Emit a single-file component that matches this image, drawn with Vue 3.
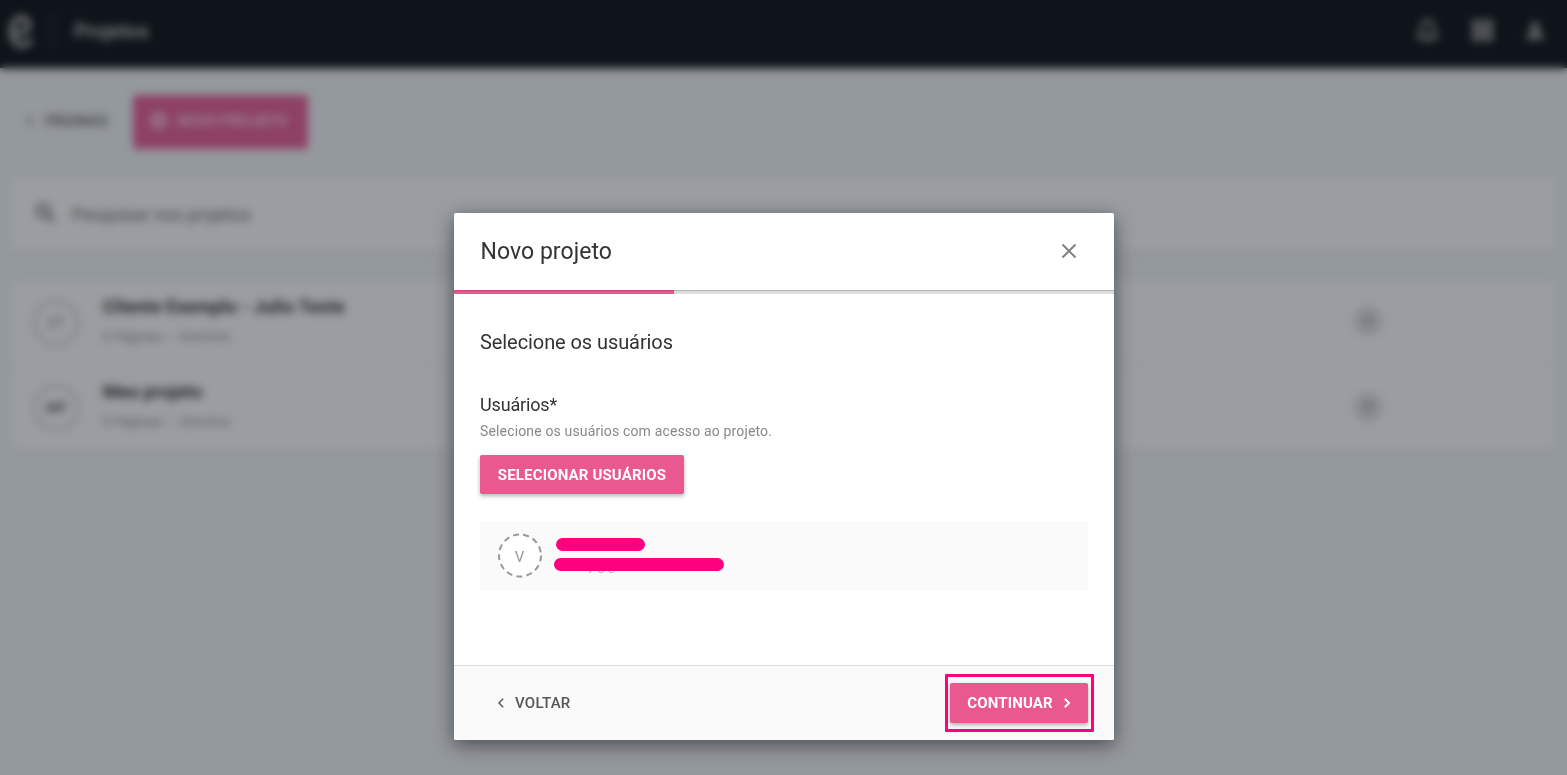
<script setup>
    import { ref } from 'vue';

    const projects = ref([
        { initials: "CT", name: "Cliente Exemplo - Julio Teste", info: "0 Páginas  •  Domínio" },
        { initials: "MP", name: "Meu projeto", info: "0 Páginas  •  Domínio" }
    ]);
    const progress = ref(33.33);
    const open = ref(true);
</script>

<template>
    <div class="page">
        <header class="topbar">
            <svg class="logo" viewBox="0 0 28 36">
                <path d="M7 20 C18 20 21 17 21 11 C21 6 18 4 14 4 C8 4 4 10 4 18 C4 27 8 32 14 32 C19 32 22 30 24 26" />
            </svg>
            <span class="divider"></span>
            <span class="section">Projetos</span>
            <nav class="actions">
                <svg class="bell" viewBox="0 0 24 24">
                    <path d="M12 2 C8 3 6 6 6 10 V15 L3.500 18 H20.500 L18 15 V10 C18 6 16 3 12 2 Z M10 21 H14" />
                </svg>
                <svg class="apps" viewBox="0 0 24 24">
                    <path d="M1 1h6.500v6.500H1zM8.750 1h6.500v6.500h-6.500zM16.500 1H23v6.500h-6.500zM1 8.750h6.500v6.500H1zM8.750 8.750h6.500v6.500h-6.500zM16.500 8.750H23v6.500h-6.500zM1 16.500h6.500V23H1zM8.750 16.500h6.500V23h-6.500zM16.500 16.500H23V23h-6.500z" />
                </svg>
                <svg class="person" viewBox="0 0 24 24">
                    <circle cx="12" cy="7" r="5.500" />
                    <path d="M2 22 V19 C2 15 7 13 12 13 S22 15 22 19 V22 Z" />
                </svg>
            </nav>
        </header>

        <div class="toolbar">
            <button class="back">
                <svg viewBox="0 0 8 12"><path d="M6.500 1.500 L2 6 L6.500 10.500" /></svg>
                PÁGINAS
            </button>
            <button class="newProject">
                <svg viewBox="0 0 16 16">
                    <circle cx="8" cy="8" r="6.500" />
                    <path d="M8 5 V11 M5 8 H11" />
                </svg>
                NOVO PROJETO
            </button>
        </div>

        <div class="search">
            <svg viewBox="0 0 24 24">
                <circle cx="9.500" cy="9.500" r="7" />
                <path d="M15 15 L22 22" />
            </svg>
            Pesquisar nos projetos
        </div>

        <ul class="projects">
            <li v-for="project of projects" :key="project.initials">
                <span class="initials">{{ project.initials }}</span>
                <div class="details">
                    <strong>{{ project.name }}</strong>
                    <small>{{ project.info }}</small>
                </div>
                <span class="more">+</span>
            </li>
        </ul>
    </div>

    <div v-if="open" class="overlay">
        <section class="modal">
            <header class="modalHeader">
                <h1>Novo projeto</h1>
                <button class="close" aria-label="Fechar" @click="open = false">
                    <svg viewBox="0 0 16 16"><path d="M1.500 1.500 L14.500 14.500 M14.500 1.500 L1.500 14.500" /></svg>
                </button>
            </header>
            <div class="progress">
                <div class="bar" :style="{ width: progress + '%' }"></div>
            </div>

            <div class="content">
                <h2>Selecione os usuários</h2>
                <h3>Usuários*</h3>
                <p>Selecione os usuários com acesso ao projeto.</p>
                <button class="primary select">SELECIONAR USUÁRIOS</button>

                <div class="user">
                    <svg class="avatar" viewBox="0 0 44 44">
                        <circle cx="22" cy="21.500" r="21" />
                        <text x="21.500" y="27.500">V</text>
                    </svg>
                    <div class="redacted">
                        <span class="name"></span>
                        <span class="email"></span>
                        <svg class="descenders" viewBox="0 0 30 3">
                            <path d="M1 1.500 Q3 1.500 3.500 0 M10 0.500 Q13 2.500 16 0.500 M21 0 Q21 1.500 23.500 1.500 Q26 1.500 26 0" />
                        </svg>
                    </div>
                </div>
            </div>

            <footer>
                <button class="previous">
                    <svg viewBox="0 0 8 12"><path d="M6.200 1.800 L2 6 L6.200 10.200" /></svg>
                    VOLTAR
                </button>
                <div class="highlight">
                    <button class="primary continue">
                        CONTINUAR
                        <svg viewBox="0 0 8 12"><path d="M1.800 1.800 L6 6 L1.800 10.200" /></svg>
                    </button>
                </div>
            </footer>
        </section>
    </div>
</template>

<style>
    body {
        margin: 0;
        overflow: hidden;
    }
</style>

<style scoped>
    .page,
    .overlay {
        font-family: Roboto, "Liberation Sans", sans-serif;
        box-sizing: border-box;
        width: 100vw;
        height: 100vh;
    }

    .page {
        background-color: #f6f8fa;
        color: #3c3c3c;
    }

    button {
        font: inherit;
        border: none;
        background: none;
        padding: 0;
        display: flex;
        align-items: center;
        cursor: pointer;
    }

    svg {
        display: block;
        flex: none;
        fill: none;
        stroke: currentColor;
    }

    .topbar {
        height: 68px;
        box-sizing: border-box;
        padding: 0 22px 7px 8px;
        background-color: #171b1e;
        box-shadow: 0 1px 4px rgba(0, 0, 0, 0.3);
        color: #aaa;
        display: flex;
        align-items: center;
    }

    .logo {
        width: 27px;
        height: 35px;
        margin-top: 2px;
        stroke-width: 6;
    }

    .divider {
        width: 2px;
        height: 34px;
        margin: 0 20px 0 17px;
        background-color: #3c4042;
    }

    .section {
        font-size: 20px;
        font-weight: 500;
        color: #ccc;
    }

    .actions {
        margin-left: auto;
        display: flex;
        align-items: center;
    }

    .bell {
        width: 25px;
        height: 26px;
        stroke-width: 3;
        margin-right: 31px;
    }

    .apps {
        width: 23px;
        height: 23px;
        fill: currentColor;
        stroke: none;
        margin-right: 31px;
    }

    .person {
        width: 20px;
        height: 22px;
        fill: currentColor;
        stroke: none;
    }

    .toolbar {
        display: flex;
        align-items: center;
        padding: 27px 26px 0;
        font-size: 15px;
        letter-spacing: 0.2px;
    }

    .back {
        width: 107px;
        padding-bottom: 3px;
        color: #666;
        font-weight: 500;
        gap: 11px;
    }

    .back svg {
        width: 8px;
        height: 12px;
        stroke-width: 1.500;
    }

    .newProject {
        width: 175px;
        height: 54px;
        padding: 0 0 3px 17px;
        box-sizing: border-box;
        gap: 10px;
        color: #ffd0e3;
        background-color: #ea669a;
        border-radius: 2px;
        font-weight: 700;
        white-space: nowrap;
    }

    .newProject svg {
        width: 17px;
        height: 17px;
        stroke-width: 3;
    }

    .search,
    .projects {
        background-color: white;
        box-shadow: 0 1px 4px rgba(0, 0, 0, 0.08);
        margin: 29px 10px 0;
    }

    .search {
        height: 73px;
        box-sizing: border-box;
        padding: 0 25px;
        display: flex;
        align-items: center;
        gap: 16px;
        font-size: 17.500px;
        color: #777;
    }

    .search svg {
        width: 21px;
        height: 22px;
        stroke-width: 3;
        color: #666;
        margin-bottom: 3px;
    }

    .projects {
        padding: 0;
        list-style: none;
    }

    .projects li {
        height: 85px;
        box-sizing: border-box;
        padding: 0 174px 0 23px;
        display: flex;
        align-items: center;
    }

    .projects li + li {
        border-top: 1px solid #e4e4e4;
    }

    .initials {
        width: 46px;
        height: 46px;
        border: 2px dashed #999;
        border-radius: 50%;
        box-sizing: border-box;
        display: grid;
        place-items: center;
        font-size: 14px;
        color: #888;
    }

    .projects li:last-child .initials {
        color: #444;
    }

    .details {
        display: flex;
        flex-direction: column;
        gap: 11px;
        margin-left: 24px;
        padding-bottom: 6px;
    }

    .details strong {
        font-size: 18px;
        line-height: 22px;
        font-weight: 700;
        letter-spacing: 0.2px;
    }

    .details small {
        font-size: 13px;
        line-height: 15px;
        letter-spacing: 0.2px;
        color: #909090;
        white-space: pre;
    }

    .more {
        width: 30px;
        height: 30px;
        border-radius: 50%;
        margin: 0 0 3px auto;
        background-color: #e4e4e4;
        color: #888;
        display: grid;
        place-items: center;
        font-size: 18px;
    }

    .overlay {
        position: fixed;
        left: 0;
        top: 0;
        padding-top: 213px;
        padding-left: 1px;
        display: flex;
        justify-content: center;
        align-items: flex-start;
        background-color: rgba(3, 10, 20, 0.4);
        backdrop-filter: blur(4px);
    }

    .modal {
        width: 660px;
        height: 527px;
        background-color: white;
        border-radius: 2px;
        overflow: hidden;
        display: flex;
        flex-direction: column;
        box-shadow: 0 5px 20px rgba(0, 0, 0, 0.5);
    }

    .modalHeader {
        height: 77px;
        box-sizing: border-box;
        padding: 0 37px 0 26.500px;
        display: flex;
        align-items: center;
        justify-content: space-between;
    }

    h1,
    h2,
    h3,
    p {
        margin: 0;
        font-weight: 400;
        color: #333;
    }

    h1 {
        font-size: 23px;
        letter-spacing: 0.05px;
    }

    .close {
        color: #808080;
        padding-bottom: 1px;
    }

    .close svg {
        width: 16px;
        height: 16px;
        stroke-width: 2;
    }

    .progress {
        height: 4px;
        background-color: #ddd;
        box-shadow: inset 0 1px 1px rgba(0, 0, 0, 0.2);
    }

    .bar {
        height: 100%;
        background-color: #e9588f;
        box-shadow: inset 0 1px 1px rgba(0, 0, 0, 0.15);
    }

    .content {
        flex: 1;
        padding: 36px 26px 0;
    }

    h2 {
        font-size: 20px;
        line-height: 24px;
        letter-spacing: -0.08px;
    }

    h3 {
        font-size: 18px;
        line-height: 22px;
        letter-spacing: -0.15px;
        margin-top: 40px;
    }

    p {
        font-size: 14px;
        line-height: 18px;
        letter-spacing: 0.15px;
        margin-top: 6px;
        color: #888;
    }

    .primary {
        background-color: #e9588f;
        color: white;
        border-radius: 2px;
        font-size: 15px;
        font-weight: 700;
        letter-spacing: 0.15px;
        box-shadow: 0 2px 4px rgba(0, 0, 0, 0.3);
    }

    .select {
        width: 204px;
        height: 39px;
        margin-top: 15px;
        justify-content: center;
    }

    .user {
        height: 70px;
        box-sizing: border-box;
        margin-top: 27px;
        padding: 0 0 1px 18px;
        display: flex;
        align-items: center;
        background-color: #fafafa;
        border-radius: 2px;
    }

    .avatar {
        width: 44px;
        height: 44px;
        overflow: visible;
    }

    .avatar circle {
        fill: white;
        stroke: #999;
        stroke-width: 2;
        stroke-dasharray: 6 4.150;
    }

    .avatar text {
        font-size: 15px;
        text-anchor: middle;
        fill: #999;
        stroke: none;
    }

    .redacted {
        display: flex;
        flex-direction: column;
        margin: 0 0 1px 12px;
    }

    .name,
    .email {
        height: 13px;
        border-radius: 7px;
        background-color: #ff0080;
    }

    .name {
        width: 89px;
        margin: 2px 0 7px 2px;
    }

    .email {
        width: 170px;
    }

    .descenders {
        width: 30px;
        height: 3px;
        margin-left: 34px;
        color: #aaa;
    }

    footer {
        height: 75px;
        box-sizing: border-box;
        border-top: 1px solid #ddd;
        padding: 0 20px 0 43px;
        background-color: #fafafa;
        display: flex;
        align-items: center;
        justify-content: space-between;
    }

    footer svg {
        width: 8px;
        height: 12px;
        stroke-width: 1.400;
    }

    .previous {
        gap: 10px;
        font-size: 15px;
        font-weight: 500;
        letter-spacing: 0.25px;
        color: #555;
    }

    .highlight {
        border: 3px solid #ff0080;
        border-radius: 1px;
        padding: 6px 3px 6px 2px;
    }

    .continue {
        width: 138px;
        height: 40px;
        justify-content: center;
        gap: 10px;
    }

    .continue svg {
        stroke-width: 2;
    }
</style>
